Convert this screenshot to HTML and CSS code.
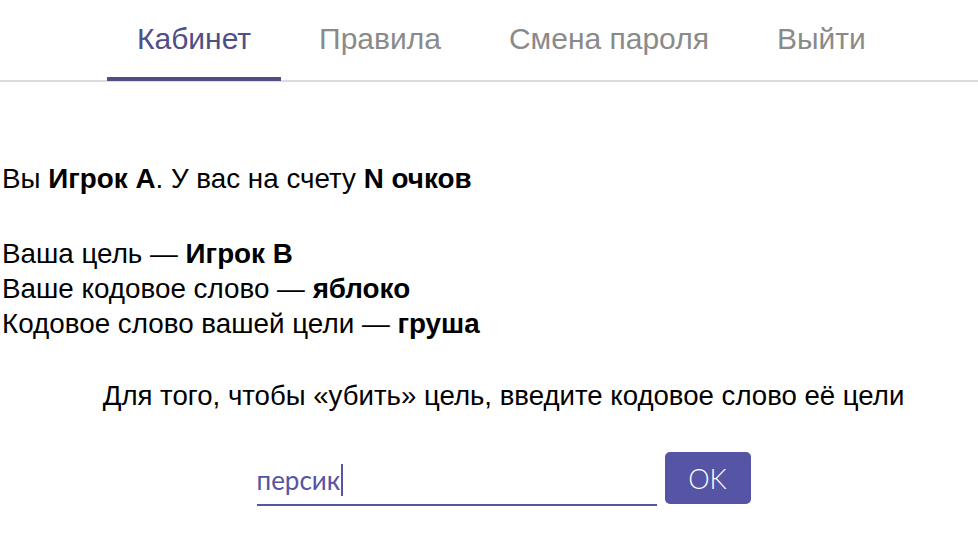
FILE: index.html
```html
<!DOCTYPE html>
<html lang="ru">
<head>
<meta charset="utf-8">
<title>Кабинет</title>
<link rel="stylesheet" href="styles.css">
</head>
<body>
<div class="page">
  <nav class="tabs">
    <a class="tab active">Кабинет</a>
    <a class="tab">Правила</a>
    <a class="tab">Смена пароля</a>
    <a class="tab">Выйти</a>
  </nav>
  <main class="content">
    <p class="info first">Вы <b>Игрок А</b>. У вас на счету <b>N очков</b></p>
    <p class="info">Ваша цель — <b>Игрок В</b><br>Ваше кодовое слово — <b>яблоко</b><br>Кодовое слово вашей цели — <b>груша</b></p>
    <p class="hint">Для того, чтобы «убить» цель, введите кодовое слово её цели</p>
    <form class="kill">
      <div class="field"><span class="value">персик</span><span class="caret"></span></div>
      <button type="button" class="ok">OK</button>
    </form>
  </main>
</div>
</body>
</html>
```
FILE: styles.css
```css
html, body {
  margin: 0;
  padding: 0;
  background: #fff;
  overflow: hidden;
}
body {
  font-family: "Liberation Sans", Arial, sans-serif;
  color: #000;
}
.page {
  width: 1005px;
}
.tabs {
  display: flex;
  gap: 8px;
  padding-left: 107px;
  height: 80px;
  border-bottom: 2px solid #dcdcdc;
  align-items: flex-end;
}
.tab {
  display: block;
  padding: 0 30px;
  box-sizing: border-box;
  font-size: 30px;
  color: #8a8a8a;
  text-decoration: none;
  margin-bottom: -1px;
  border-bottom: 4px solid transparent;
  height: 81px;
  line-height: 78px;
}
.tab.active {
  color: #4f4e86;
  border-bottom-color: #4f4e86;
}
.content {
  padding-left: 2px;
}
.info {
  margin: 0;
  font-size: 27.8px;
  line-height: 35px;
}
.info.first {
  margin-top: 79px;
  margin-bottom: 40px;
}
.hint {
  margin: 37px 0 0;
  text-align: center;
  font-size: 27.6px;
  line-height: 35px;
}
.kill {
  display: flex;
  justify-content: center;
  align-items: flex-end;
  gap: 8px;
  margin-top: 39px;
}
.field {
  width: 400px;
  height: 54px;
  box-sizing: border-box;
  border-bottom: 2px solid #5654a5;
  display: flex;
  align-items: center;
  padding-top: 4px;
  font-family: Lato, "Open Sans", sans-serif;
  font-size: 26px;
  color: #5654a5;
}
.caret {
  display: inline-block;
  width: 2px;
  height: 32px;
  background: #5654a5;
  margin-left: 1px;
}
.ok {
  width: 86px;
  height: 52px;
  margin-bottom: 2px;
  border: none;
  border-radius: 5px;
  background: #5654a5;
  color: #fff;
  font-family: Lato, "Open Sans", sans-serif;
  font-size: 27px;
  font-weight: 300;
  padding: 0;
}
```
